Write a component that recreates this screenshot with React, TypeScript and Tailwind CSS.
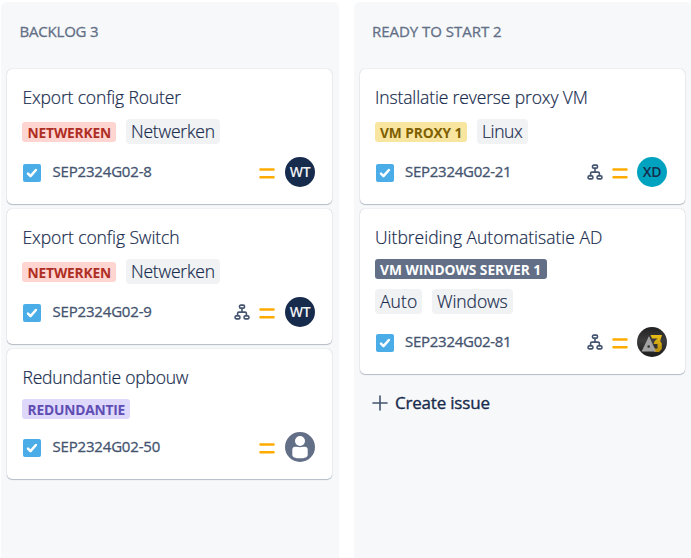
import type { ReactNode } from "react";

const Check = () => (
  <svg className="mt-[2px] size-[18px] shrink-0" viewBox="0 0 18 18" fill="none">
    <rect width="18" height="18" rx="2" fill="#4bade8" />
    <path d="M5 9.6l2.5 2.5L12.9 6" stroke="#fff" strokeWidth="2.5" strokeLinecap="round" strokeLinejoin="round" />
  </svg>
);

const Tree = () => (
  <svg className="size-4 shrink-0" viewBox="0 0 16 16" fill="none" stroke="#44546f" strokeWidth="1.6">
    <rect x="5.5" y="1.1" width="5" height="3" rx="1.2" />
    <rect x="1.1" y="11.9" width="4.8" height="3" rx="1.2" />
    <rect x="10.1" y="11.9" width="4.8" height="3" rx="1.2" />
    <path d="M8 4.1v4.1M3.6 11.9V9.4c0-.8.5-1.3 1.3-1.3h6.2c.8 0 1.3.5 1.3 1.3v2.5" />
  </svg>
);

const Priority = () => (
  <svg className="mt-[2px] h-[11px] w-4 shrink-0" viewBox="0 0 16 11" fill="#ffab00">
    <rect x="0.3" y="0.3" width="15.4" height="2.5" rx="1" />
    <rect x="0.3" y="7.9" width="15.4" height="2.5" rx="1" />
  </svg>
);

const Initials = ({ text, style }: { text: string; style: string }) => (
  <div className={`flex size-[30px] items-center justify-center rounded-full text-[14px] leading-none font-semibold tracking-[-0.3px] ${style}`}>
    {text}
  </div>
);

const Unassigned = () => (
  <svg className="size-[30px]" viewBox="0 0 30 30">
    <circle cx="15" cy="15" r="15" fill="#626f86" />
    <path d="M7.3 17.8c0-2 1-3.1 3-3.1h9.4c2 0 3 1.1 3 3.1v5.1c0 2-2.8 3.4-7.7 3.4s-7.7-1.4-7.7-3.4z" fill="#fff" />
    <circle cx="15" cy="9" r="5.6" fill="#fff" stroke="#626f86" strokeWidth="1.2" />
  </svg>
);

const Badge3 = () => (
  <svg className="size-[30px]" viewBox="0 0 30 30">
    <defs>
      <linearGradient id="dark" x1="0" y1="0" x2="0" y2="1">
        <stop offset="0" stopColor="#222" />
        <stop offset="0.45" stopColor="#3c3c3c" />
        <stop offset="1" stopColor="#1c1c1c" />
      </linearGradient>
      <linearGradient id="gold" x1="0" y1="0" x2="0" y2="1">
        <stop offset="0" stopColor="#e9bd16" />
        <stop offset="1" stopColor="#b98d0c" />
      </linearGradient>
    </defs>
    <circle cx="15" cy="15" r="15" fill="url(#dark)" />
    <path d="M13.5 8H25l-1.8 6 1.6 2.5V22L22 25h-4.5l-1.5-3.5 1-1 1 1h2.5v-4.5h-4l1.2-3 3-2.5H15z" fill="url(#gold)" />
    <path fillRule="evenodd" d="M12 9L4.6 24.5H19zM11.6 18.2a1.2 1.2 0 1 0 .1 2.6 1.2 1.2 0 0 0-.1-2.6z" fill="#a2a2a2" />
  </svg>
);

const Tag = ({ children, fit }: { children: ReactNode; fit: string }) => (
  <span className={`flex h-[25px] items-center rounded bg-[#f1f2f4] pl-[5px] text-[17.5px] leading-none font-light whitespace-nowrap [-webkit-text-stroke:0.2px] ${fit}`}>
    {children}
  </span>
);

type CardProps = {
  title: string;
  titleFit: string;
  epic: string;
  epicStyle: string;
  inlineTags?: ReactNode;
  tags?: ReactNode;
  id: string;
  idFit: string;
  tree?: boolean;
  avatar: ReactNode;
  avatarFit?: string;
};

const Card = ({ title, titleFit, epic, epicStyle, inlineTags, tags, id, idFit, tree, avatar, avatarFit = "ml-px" }: CardProps) => (
  <article className="w-[325px] rounded-[5px] bg-white pr-[17px] pb-[17px] pl-[15px] shadow-[0_1px_1px_#091e4240,0_0_1px_#091e424f]">
    <h3 className={`h-[50px] pt-[16px] text-[17.5px] leading-[25px] font-light whitespace-nowrap [-webkit-text-stroke:0.2px] ${titleFit}`}>{title}</h3>
    <div className="flex items-end gap-[10px]">
      <span className={`flex h-5 items-center rounded-[3px] pt-px text-[13.75px] leading-none font-bold whitespace-nowrap ${inlineTags ? "mb-[2px]" : ""} ${epicStyle}`}>
        {epic}
      </span>
      {inlineTags}
    </div>
    {tags && <div className="mt-[10px] flex gap-[10px]">{tags}</div>}
    <div className="mt-[13px] flex h-[30px] items-center pl-px">
      <Check />
      <span className={`pb-[2px] text-[15px] leading-none text-[#44546f] [-webkit-text-stroke:0.3px] ${idFit}`}>{id}</span>
      <div className="ml-auto flex items-center gap-[9px]">
        {tree && <Tree />}
        <Priority />
        <div className={avatarFit}>{avatar}</div>
      </div>
    </div>
  </article>
);

const Column = ({ name, fit, children }: { name: string; fit: string; children: ReactNode }) => (
  <section className="w-[338px] shrink-0 rounded-t-[6px] bg-[#f7f8f9] px-[6px]">
    <h2 className={`h-[67px] pt-[19px] pl-[12px] text-[15px] leading-5 font-normal whitespace-nowrap text-[#626f86] [-webkit-text-stroke:0.3px] ${fit}`}>{name}</h2>
    <div className="flex flex-col gap-[5px]">{children}</div>
  </section>
);

const red = "bg-[#ffd5d2] text-[#ae2e24] w-[94px] pl-[5.5px] tracking-[-0.15px]";

export default function App() {
  return (
    <main className="flex h-[558px] w-[691px] gap-[15px] overflow-hidden bg-white pt-[2px] pl-px font-['Open_Sans','Noto_Sans',sans-serif] text-[#172b4d]">
      <Column name="BACKLOG 3" fit="tracking-[-0.2px] indent-[0.5px]">
        <Card
          title="Export config Router" titleFit="pl-[0.5px] tracking-[-0.15px]"
          epic="NETWERKEN" epicStyle={red}
          inlineTags={<Tag fit="w-[94px] tracking-[-0.2px]">Netwerken</Tag>}
          id="SEP2324G02-8" idFit="ml-[11.5px] tracking-[-0.18px]"
          avatar={<Initials text="WT" style="bg-[#172b4d] text-[#f1f2f4]" />}
        />
        <Card
          title="Export config Switch" titleFit="pl-[0.5px] tracking-[-0.08px]"
          epic="NETWERKEN" epicStyle={red}
          inlineTags={<Tag fit="w-[94px] tracking-[-0.2px]">Netwerken</Tag>}
          id="SEP2324G02-9" idFit="ml-[11.5px] tracking-[-0.18px]" tree
          avatar={<Initials text="WT" style="bg-[#172b4d] text-[#f1f2f4]" />}
        />
        <Card
          title="Redundantie opbouw" titleFit="pl-[0.5px] tracking-[-0.2px]"
          epic="REDUNDANTIE" epicStyle="bg-[#dfd8fd] text-[#5e4db2] w-[108px] pl-[5.5px] tracking-[-0.18px]"
          id="SEP2324G02-50" idFit="ml-[11.5px] tracking-[-0.18px]"
          avatar={<Unassigned />}
        />
      </Column>
      <Column name="READY TO START 2" fit="tracking-[-0.03px]">
        <Card
          title="Installatie reverse proxy VM" titleFit="tracking-[-0.13px]"
          epic="VM PROXY 1" epicStyle="bg-[#f8e6a0] text-[#7f5f01] w-[92px] pl-[5px] tracking-[-0.1px]"
          inlineTags={<Tag fit="w-[51px] tracking-[-0.4px]">Linux</Tag>}
          id="SEP2324G02-21" idFit="ml-[11px] tracking-[-0.27px]" tree
          avatar={<Initials text="XD" style="bg-[#00a3bf] text-[#172b4d]" />}
          avatarFit="mr-px"
        />
        <Card
          title="Uitbreiding Automatisatie AD" titleFit="tracking-[0px]"
          epic="VM WINDOWS SERVER 1" epicStyle="bg-[#626f86] text-white w-[172px] pl-[5px] tracking-[-0.02px]"
          tags={
            <>
              <Tag fit="w-[47px] tracking-[0.1px]">Auto</Tag>
              <Tag fit="w-[81px] tracking-[-0.1px]">Windows</Tag>
            </>
          }
          id="SEP2324G02-81" idFit="ml-[11px] tracking-[-0.27px]" tree
          avatar={<Badge3 />}
          avatarFit="mr-px"
        />
        <button className="mt-[11px] flex items-center gap-[7px] pl-[12px] text-[17px] leading-6 font-normal text-[#172b4d]">
          <svg className="size-4" viewBox="0 0 16 16" stroke="#44546f" strokeWidth="1.6" strokeLinecap="round">
            <path d="M8 1v14M1 8h14" />
          </svg>
          <span className="pt-px tracking-[-0.2px] [-webkit-text-stroke:0.35px]">Create issue</span>
        </button>
      </Column>
    </main>
  );
}
